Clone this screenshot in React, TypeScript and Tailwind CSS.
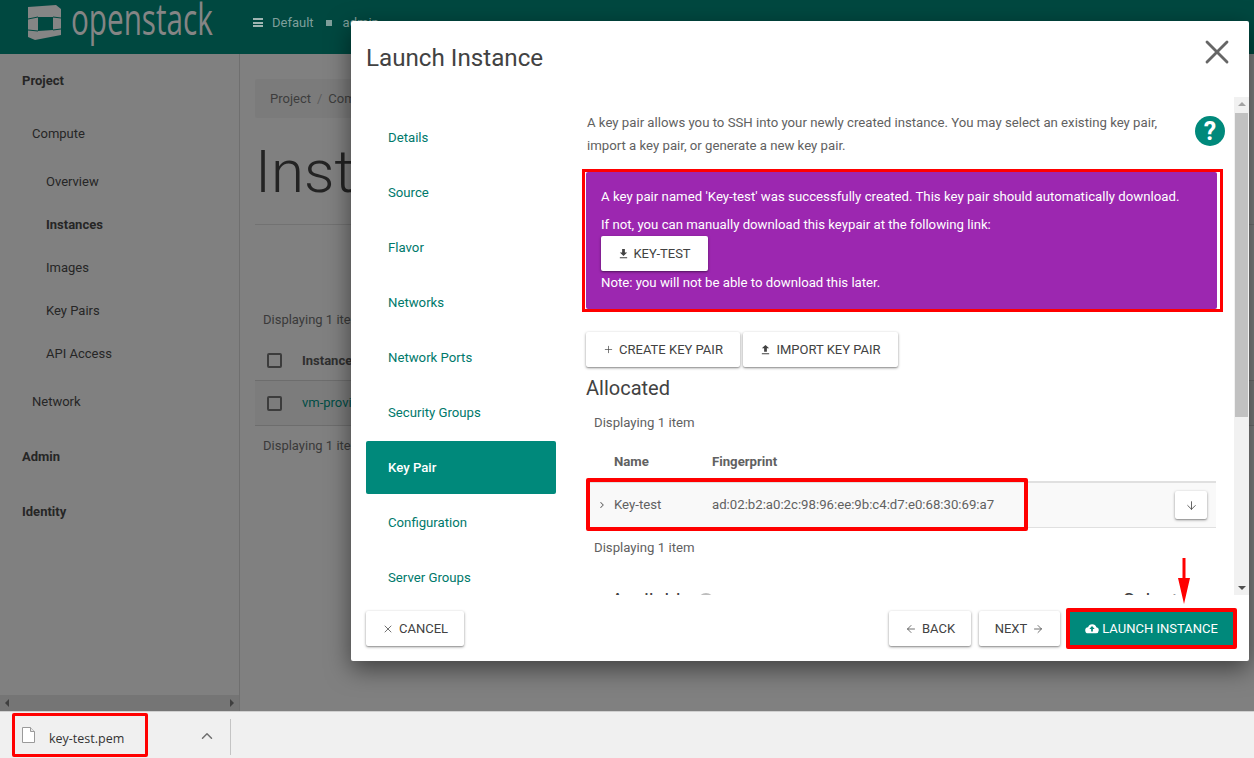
import { ArrowDown, ArrowLeft, ArrowRight, ChevronRight, ChevronUp, Plus, X } from "lucide-react";

const STEPS = [
  "Details",
  "Source",
  "Flavor",
  "Networks",
  "Network Ports",
  "Security Groups",
  "Key Pair",
  "Configuration",
  "Server Groups",
];

const BTN =
  "inline-flex shrink-0 items-center justify-center rounded-[2px] bg-white text-[13px] uppercase text-[#424242] shadow-[0_1px_3px_rgba(0,0,0,0.4),0_1px_1px_rgba(0,0,0,0.14)]";

function DownloadIcon({ className }: { className?: string }) {
  return (
    <svg viewBox="0 0 12 12" className={className} fill="currentColor">
      <path d="M4.500 1h3v4H10L6 8.600 2 5h2.500zM2 10h8v1.300H2z" />
    </svg>
  );
}

function UploadIcon({ className }: { className?: string }) {
  return (
    <svg viewBox="0 0 12 12" className={className} fill="currentColor">
      <path d="M4.500 8.500h3v-4H10L6 1 2 4.500h2.500zM2 10h8v1.300H2z" />
    </svg>
  );
}

function Logo() {
  return (
    <svg viewBox="0 0 36 36" className="h-[36px] w-[36px] shrink-0">
      <path
        fillRule="evenodd"
        fill="#858585"
        d="M1 2 L29 0 L34 4 L34 30 L8 35 L1 32 Z M11 12 L11 26 L26 25 L26 12 Z"
      />
      <path d="M1 14 L11 12 M1 25 L11 26 M26 12 L34 13 M26 25 L34 24" stroke="#004840" strokeWidth="1" fill="none" />
    </svg>
  );
}

function Sidebar() {
  return (
    <aside className="flex w-[240px] shrink-0 flex-col border-r border-[#6f6f6f] bg-[#808080] text-[13px] text-[#262626]">
      <div className="flex-1">
        <div className="pl-[22px] pt-[19px] font-bold leading-[16px]">Project</div>
        <div className="pl-[32px] pt-[37px] leading-[16px]">Compute</div>
        <div className="pl-[46px] pt-[32px] leading-[16px]">Overview</div>
        <div className="pl-[46px] pt-[27px] font-bold leading-[16px]">Instances</div>
        <div className="pl-[46px] pt-[27px] leading-[16px]">Images</div>
        <div className="pl-[46px] pt-[27px] leading-[16px]">Key Pairs</div>
        <div className="pl-[46px] pt-[27px] leading-[16px]">API Access</div>
        <div className="pl-[32px] pt-[32px] leading-[16px]">Network</div>
        <div className="pl-[22px] pt-[39px] font-bold leading-[16px]">Admin</div>
        <div className="pl-[22px] pt-[39px] font-bold leading-[16px]">Identity</div>
      </div>
      <div className="flex h-[16px] items-center justify-between bg-[#757575] px-[5px]">
        <span className="h-0 w-0 border-y-[4px] border-r-[4px] border-y-transparent border-r-[#3f3f3f]" />
        <span className="h-0 w-0 border-y-[4px] border-l-[4px] border-y-transparent border-l-[#3f3f3f]" />
      </div>
    </aside>
  );
}

function Background() {
  return (
    <div className="min-w-0 flex-1 bg-[#808080] pl-[15px] pt-[25px] text-[13px] text-[#333333]">
      <div className="flex h-[39px] w-[400px] items-center rounded-[2px] bg-[#7b7b7b] pl-[15px] text-[#3d3d3d]">
        Project<span className="px-[6px] text-[#5c5c5c]">/</span>Compute
      </div>
      <h1 className="mt-[18px] border-b border-[#727272] pb-[16px] text-[60px] font-light leading-[72px] text-[#232323]">
        Instances
      </h1>
      <div className="mt-[87px] pl-[8px] leading-[16px] text-[#3a3a3a]">Displaying 1 item</div>
      <div className="mt-[14px] flex h-[39px] items-center border-b border-[#6d6d6d] pb-[1px] pl-[12px] font-bold text-[#2f2f2f]">
        <span className="mr-[20px] h-[15px] w-[15px] rounded-[2px] border-2 border-[#3c3c3c]" />
        Instance Name
      </div>
      <div className="flex h-[45px] items-center border-b border-[#6d6d6d] bg-[#7c7c7c] pl-[12px] text-[#004d45]">
        <span className="mr-[20px] h-[15px] w-[15px] rounded-[2px] border-2 border-[#3c3c3c]" />
        vm-provider
      </div>
      <div className="mt-[12px] pl-[8px] leading-[16px] text-[#3a3a3a]">Displaying 1 item</div>
    </div>
  );
}

function KeyPairPane() {
  return (
    <div className="relative min-w-0 flex-1 overflow-hidden">
      <div className="h-[498px] overflow-hidden pl-[30px] pr-[33px] pt-[14px] text-[13.2px] text-[#616161]">
        <p className="ml-px w-[590px] leading-[23px]">
          A key pair allows you to SSH into your newly created instance. You may select an existing key pair, import a
          key pair, or generate a new key pair.
        </p>
        <div className="mt-[15px] h-[137px] w-[631px] rounded-[2px] bg-[#9c27b0] pl-[15px] pt-[15px] text-white">
          <p className="leading-[19px] tracking-[0.02px]">
            A key pair named 'Key-test' was successfully created. This key pair should automatically download.
          </p>
          <p className="mt-[9px] leading-[19px]">If not, you can manually download this keypair at the following link:</p>
          <button className={`${BTN} mt-[2px] h-[35px] w-[107px] gap-[4px]`}>
            <DownloadIcon className="h-[11px] w-[11px]" />
            KEY-TEST
          </button>
          <p className="mt-[2px] leading-[19px]">Note: you will not be able to download this later.</p>
        </div>
        <div className="mt-[23px] flex gap-[3px]">
          <button className={`${BTN} h-[35px] w-[154px] gap-[5px]`}>
            <Plus size={11} strokeWidth={1.5} />
            CREATE KEY PAIR
          </button>
          <button className={`${BTN} h-[35px] w-[155px] gap-[5px]`}>
            <UploadIcon className="h-[11px] w-[11px]" />
            IMPORT KEY PAIR
          </button>
        </div>
        <h2 className="mt-[9px] text-[20px] font-normal leading-[24px] text-[#424242]">Allocated</h2>
        <div className="mt-[13px] pl-[8px] leading-[19px]">Displaying 1 item</div>
        <div className="mt-[12px] flex h-[39px] items-center border-b-2 border-[#e0e0e0] pb-[2px] font-bold">
          <span className="w-[126px] pl-[28px]">Name</span>
          <span>Fingerprint</span>
        </div>
        <div className="flex h-[45px] items-center border-b border-[#e0e0e0] bg-[#f9f9f9]">
          <ChevronRight size={10} strokeWidth={2.5} className="ml-[11px] shrink-0" />
          <span className="w-[105px] pl-[7px]">Key-test</span>
          <span>ad:02:b2:a0:2c:98:96:ee:9b:c4:d7:e0:68:30:69:a7</span>
          <button className={`${BTN} ml-auto mr-[9px] h-[28px] w-[32px]`}>
            <ArrowDown size={13} strokeWidth={1.5} />
          </button>
        </div>
        <div className="mt-[10px] pl-[8px] leading-[19px]">Displaying 1 item</div>
        <div className="mt-[32px] flex items-center justify-between pl-[25px] pr-0 text-[20px] leading-[24px] text-[#424242]">
          <span className="flex items-center gap-[7px]">
            Available
            <span className="h-[16px] w-[16px] rounded-full bg-[#bdbdbd]" />
          </span>
          <span>Select one</span>
        </div>
      </div>
      <div className="absolute bottom-0 right-0 top-0 flex w-[15px] flex-col items-center justify-between bg-[#f1f1f1] py-[5px]">
        <span className="h-0 w-0 border-x-[4px] border-b-[4px] border-x-transparent border-b-[#a3a3a3]" />
        <span className="absolute left-px right-px top-[16px] h-[304px] bg-[#c1c1c1]" />
        <span className="h-0 w-0 border-x-[4px] border-t-[4px] border-x-transparent border-t-[#505050]" />
      </div>
      <div className="absolute right-[24px] top-[19px] flex h-[30px] w-[30px] items-center justify-center rounded-full bg-[#00897b] text-[25px] font-bold leading-none text-white">
        ?
      </div>
    </div>
  );
}

function Modal() {
  return (
    <div className="absolute left-[351px] top-[21px] flex h-[640px] w-[898px] flex-col rounded-[2px] bg-white shadow-[0_8px_24px_rgba(0,0,0,0.5)]">
      <div className="flex h-[76px] shrink-0 items-start justify-between pl-[15px] pr-[12px] pt-[21px]">
        <h2 className="text-[24.2px] font-normal leading-[32px] text-[#424242]">Launch Instance</h2>
        <X size={40} strokeWidth={1.7} className="mt-[-10px] text-[#666666]" />
      </div>
      <div className="flex min-h-0 flex-1">
        <nav className="flex w-[205px] shrink-0 flex-col overflow-hidden pl-[15px] pt-[13px] text-[13.2px] text-[#00796b]">
          {STEPS.map((s) =>
            s === "Key Pair" ? (
              <div
                key={s}
                className="my-px flex h-[53px] w-[190px] shrink-0 items-center rounded-[2px] bg-[#00897b] pl-[22px] font-medium text-white"
              >
                {s}
              </div>
            ) : (
              <div key={s} className="flex h-[55px] w-[190px] shrink-0 items-center pl-[22px]">
                {s}
              </div>
            ),
          )}
        </nav>
        <KeyPairPane />
      </div>
      <div className="flex h-[66px] shrink-0 items-start justify-between pl-[15px] pr-[12px] pt-[16px]">
        <button className={`${BTN} h-[35px] w-[98px] gap-[5px]`}>
          <X size={12} strokeWidth={1.5} />
          CANCEL
        </button>
        <div className="flex gap-[8px]">
          <button className={`${BTN} h-[35px] w-[82px] gap-[5px]`}>
            <ArrowLeft size={12} strokeWidth={1.5} />
            BACK
          </button>
          <button className={`${BTN} h-[35px] w-[81px] gap-[5px]`}>
            NEXT
            <ArrowRight size={12} strokeWidth={1.5} />
          </button>
          <button className="ml-[2px] inline-flex h-[35px] w-[167px] shrink-0 items-center justify-center gap-[3px] bg-[#00897b] pr-[4px] text-[13px] uppercase text-white">
            <svg viewBox="0 0 16 12" className="h-[11px] w-[14px]" fill="currentColor">
              <path
                fillRule="evenodd"
                d="M4 11.500a3.500 3.500 0 0 1-.500-7A5 5 0 0 1 13 4.600 3.500 3.500 0 0 1 12.500 11.500zM8 3 5 6.500h2V9.500h2V6.500h2z"
              />
            </svg>
            LAUNCH INSTANCE
          </button>
        </div>
      </div>
    </div>
  );
}

export default function App() {
  return (
    <div className="relative flex h-[758px] w-[1254px] flex-col overflow-hidden bg-[#808080] font-['Roboto',sans-serif]">
      <header className="flex h-[54px] shrink-0 items-center bg-[#004840] pb-[9px] pl-[27px] text-[13px] text-[#7f9f9b]">
        <Logo />
        <span className="mb-[8px] ml-[8px] w-[143px] shrink-0 origin-left scale-x-[0.69] whitespace-nowrap font-['Open_Sans',sans-serif] text-[43px] leading-[44px] text-[#858585]">
          openstack
        </span>
        <span className="ml-[39px] flex h-[9px] w-[10px] flex-col justify-between">
          <span className="h-[2px] bg-[#9fb5b2]" />
          <span className="h-[2px] bg-[#9fb5b2]" />
          <span className="h-[2px] bg-[#9fb5b2]" />
        </span>
        <span className="ml-[9px]">Default</span>
        <span className="ml-[12px] h-[6px] w-[6px] bg-[#7f9f9b]" />
        <span className="ml-[11px]">admin</span>
      </header>
      <div className="flex h-[657px] shrink-0">
        <Sidebar />
        <Background />
      </div>
      <footer className="flex h-[47px] shrink-0 items-start border-t border-[#d0d0d0] bg-[#f0f0f0]">
        <svg viewBox="0 0 13 16" className="ml-[22px] mt-[15px] h-[16px] w-[13px]" fill="#ffffff" stroke="#9a9a9a">
          <path d="M.500.500h8l4 4v11H.500z" />
          <path d="M8.500.500v4h4" fill="#e8e8e8" />
        </svg>
        <span className="ml-[14px] mt-[19px] w-[75px] whitespace-nowrap font-['Open_Sans',sans-serif] text-[12.5px] leading-[16px] text-[#333333]">
          key-test.pem
        </span>
        <ChevronUp size={18} strokeWidth={2} className="ml-[74px] mt-[15px] text-[#707070]" />
        <span className="ml-[14px] mt-[7px] h-[36px] w-px bg-[#c4c4c4]" />
      </footer>

      <Modal />

      {/* red annotations drawn over the screenshot */}
      <div className="absolute left-[582px] top-[169px] h-[143px] w-[641px] border-[3px] border-[#ff0000]" />
      <div className="absolute left-[586px] top-[478px] h-[53px] w-[442px] rounded-[2px] border-[4px] border-[#ff0000]" />
      <div className="absolute left-[1066px] top-[608px] h-[41px] w-[171px] rounded-[2px] border-[4px] border-[#ff0000]" />
      <div className="absolute left-[12px] top-[713px] h-[44px] w-[136px] rounded-[2px] border-[3px] border-[#ff0000]" />
      <svg viewBox="0 0 12 46" className="absolute left-[1178px] top-[558px] h-[46px] w-[12px]" fill="#ff0000">
        <path d="M4.500 0h3v20H12L6 46 0 20h4.500z" />
      </svg>
    </div>
  );
}
